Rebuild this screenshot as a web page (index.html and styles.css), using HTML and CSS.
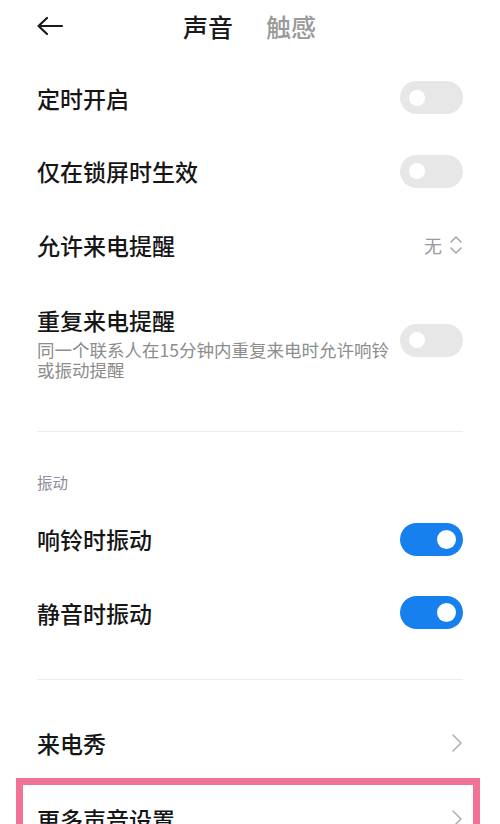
FILE: index.html
```html
<!DOCTYPE html>
<html lang="zh-CN">
<head>
<meta charset="utf-8">
<title>声音</title>
<link rel="stylesheet" href="styles.css">
</head>
<body>
<div class="page">
  <header class="topbar">
    <svg class="back" width="28" height="20" viewBox="0 0 28 20">
      <path d="M11 2 L2.5 10 L11 18 M2.5 10 H26" fill="none" stroke="#1a1a1a" stroke-width="2.2" stroke-linecap="round" stroke-linejoin="round"/>
    </svg>
    <nav class="tabs">
      <span class="tab active">声音</span>
      <span class="tab">触感</span>
    </nav>
  </header>

  <div class="row">
    <span class="title">定时开启</span>
    <span class="switch"></span>
  </div>
  <div class="row">
    <span class="title">仅在锁屏时生效</span>
    <span class="switch"></span>
  </div>
  <div class="row">
    <span class="title">允许来电提醒</span>
    <span class="value">无
      <svg width="14" height="20" viewBox="0 0 14 20"><path d="M2 7 L7 2 L12 7 M2 13 L7 18 L12 13" fill="none" stroke="#a8a8a8" stroke-width="1.6" stroke-linecap="round" stroke-linejoin="round"/></svg>
    </span>
  </div>
  <div class="row tall">
    <div class="text">
      <div class="title">重复来电提醒</div>
      <div class="sub">同一个联系人在15分钟内重复来电时允许响铃或振动提醒</div>
    </div>
    <span class="switch"></span>
  </div>

  <div class="divider first"></div>
  <div class="section">振动</div>

  <div class="row">
    <span class="title">响铃时振动</span>
    <span class="switch on"></span>
  </div>
  <div class="row">
    <span class="title">静音时振动</span>
    <span class="switch on"></span>
  </div>

  <div class="divider second"></div>

  <div class="row">
    <span class="title">来电秀</span>
    <svg class="chev" width="12" height="20" viewBox="0 0 12 20"><path d="M2 2 L10 10 L2 18" fill="none" stroke="#b0b0b0" stroke-width="1.6" stroke-linecap="round" stroke-linejoin="round"/></svg>
  </div>
  <div class="highlight">
    <div class="row inner">
      <span class="title">更多声音设置</span>
      <svg class="chev" width="12" height="20" viewBox="0 0 12 20"><path d="M2 2 L10 10 L2 18" fill="none" stroke="#b0b0b0" stroke-width="1.6" stroke-linecap="round" stroke-linejoin="round"/></svg>
    </div>
  </div>
</div>
</body>
</html>
```

FILE: styles.css
```css
html, body {
  margin: 0;
  padding: 0;
  background: #ffffff;
  overflow: hidden;
}
body {
  font-family: "Noto Sans CJK SC", "Noto Sans", sans-serif;
  color: #161616;
}
.page {
  padding: 0 37px;
  width: 500px;
  box-sizing: border-box;
  height: 824px;
  overflow: hidden;
}
.topbar {
  height: 54px;
  display: flex;
  align-items: center;
  position: relative;
  margin-bottom: 7px;
}
.back {
  display: block;
  margin-left: -1px;
  margin-top: -2px;
}
.tabs {
  display: flex;
  gap: 33px;
  margin-left: 119px;
  margin-top: -2px;
}
.tab {
  font-size: 25px;
  font-weight: 500;
  color: #9a9a9a;
  line-height: 30px;
}
.tab.active {
  color: #1a1a1a;
}
.row {
  height: 73.5px;
  display: flex;
  align-items: center;
  justify-content: space-between;
}
.title {
  font-size: 23px;
  font-weight: 500;
  line-height: 30px;
  color: #161616;
}
.row.tall {
  height: auto;
  padding: 23px 0 24px;
}
.text {
  width: 355px;
}
.sub {
  margin-top: 5px;
  font-size: 17.5px;
  line-height: 20px;
  color: #8d8d8d;
  width: 355px;
}
.switch {
  width: 63px;
  height: 33px;
  border-radius: 17px;
  background: #e7e7e7;
  position: relative;
  flex: none;
}
.switch::after {
  content: "";
  position: absolute;
  left: 9px;
  top: 8.5px;
  width: 16px;
  height: 16px;
  border-radius: 50%;
  background: #ffffff;
}
.switch.on {
  background: #1681ee;
}
.switch.on::after {
  left: auto;
  right: 7px;
  top: 7px;
  width: 19px;
  height: 19px;
}
.row.tall .switch {
  margin-top: -4px;
}
.value {
  display: flex;
  align-items: center;
  gap: 7px;
  font-size: 18px;
  color: #9a9a9a;
  line-height: 22px;
}
.value svg {
  display: block;
}
.divider {
  height: 1px;
  background: #ececec;
}
.divider.first {
  margin-top: 27px;
}
.section {
  padding: 40px 0 11px;
  font-size: 15.5px;
  line-height: 20px;
  color: #8c8c9a;
}
.divider.second {
  margin-top: 29px;
  margin-bottom: 27px;
}
.chev {
  display: block;
  margin-right: 0;
}
.highlight {
  margin: -2px -17px 0 -21px;
  border: 7px solid #f07396;
  border-bottom: none;
  padding: 0 10px 0 14px;
}
.row.inner {
  height: 68px;
}
```
